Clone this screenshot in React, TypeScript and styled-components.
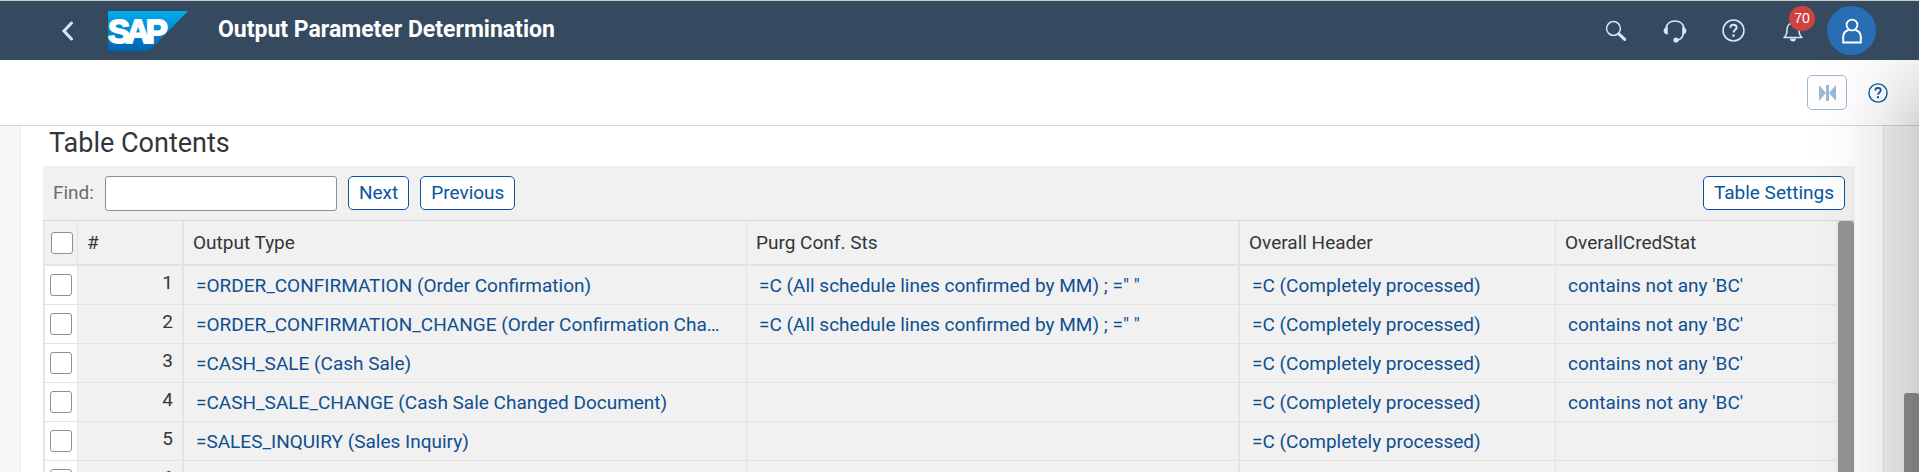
import React from "react";
import styled, { createGlobalStyle } from "styled-components";

const GlobalStyle = createGlobalStyle`
  *, *::before, *::after { box-sizing: border-box; }
  body {
    margin: 0;
    font-family: Roboto, "Liberation Sans", sans-serif;
    color: #32363a;
    background: #fff;
    overflow: hidden;
  }
`;

const Page = styled.div`
  display: flex;
  flex-direction: column;
  height: 100vh;
  overflow: hidden;
`;

const ShellBar = styled.header`
  display: flex;
  align-items: center;
  flex: none;
  height: 60px;
  padding: 0 38px 0 51px;
  background: #354a5f;
  border-top: 1px solid #c9cfc6;
`;

const BackButton = styled.button`
  display: flex;
  align-items: center;
  justify-content: center;
  width: 32px;
  height: 40px;
  padding: 0;
  border: 0;
  background: none;
  color: #d1e8ff;
`;

const LogoLink = styled.a`
  display: flex;
  margin: 0 29px 0 25px;
`;

const AppTitle = styled.h1`
  flex: 1;
  margin: 0;
  padding-bottom: 2px;
  font-size: 23px;
  line-height: 28px;
  font-weight: 700;
  color: #fff;
`;

const ShellButton = styled.button`
  position: relative;
  display: flex;
  align-items: center;
  justify-content: center;
  width: 59px;
  height: 59px;
  padding: 0;
  border: 0;
  background: none;
  color: #d1e8ff;
`;

const Badge = styled.span`
  position: absolute;
  top: 5px;
  left: 26px;
  width: 26px;
  height: 25px;
  border-radius: 13px;
  background: #cf4242;
  color: #fff;
  font-size: 14px;
  line-height: 24px;
  text-align: center;
`;

const Avatar = styled.span`
  display: flex;
  align-items: center;
  justify-content: center;
  width: 49px;
  height: 49px;
  border-radius: 50%;
  background: #286eb4;
  color: #fff;
`;

const PageToolbar = styled.div`
  display: flex;
  align-items: center;
  justify-content: flex-end;
  flex: none;
  gap: 19px;
  height: 66px;
  padding: 0 29px 0 0;
  border-bottom: 1px solid #d5d5d5;
`;

const CollapseButton = styled.button`
  display: flex;
  align-items: center;
  justify-content: center;
  width: 40px;
  height: 35px;
  padding: 0;
  border: 1px solid #9ab9d9;
  border-radius: 5px;
  background: #fff;
  color: #9ab9d9;
`;

const HelpButton = styled.button`
  display: flex;
  padding: 2px;
  border: 0;
  background: none;
  color: #0854a0;
`;

const Body = styled.main`
  display: flex;
  flex: 1;
  min-height: 0;
  padding-left: 20px;
  background: #f7f7f7;
`;

const Panel = styled.section`
  flex: 1;
  min-width: 0;
  padding: 0 28px 0 22px;
  overflow: hidden;
  background: #fff;
  border-left: 1px solid #ebebeb;
  border-right: 1px solid #e5e5e5;
`;

const PageScroll = styled.div`
  flex: none;
  width: 15px;
  margin-left: 20px;
  padding-top: 267px;
  background: #fbfbfb;
`;

const ScrollThumb = styled.div`
  height: 100%;
  border-radius: 3px 3px 0 0;
  background: #949494;
`;

const PanelTitle = styled.h2`
  height: 40px;
  margin: 0;
  padding: 0 6px;
  font-size: 27px;
  line-height: 34px;
  font-weight: 400;
`;

const FindBar = styled.div`
  display: flex;
  align-items: center;
  gap: 11px;
  height: 54px;
  padding: 0 10px;
  background: #f1f1f1;
`;

const FindLabel = styled.label`
  font-size: 19px;
  line-height: 24px;
  color: #6a6d70;
`;

const FindInput = styled.input`
  width: 232px;
  height: 35px;
  padding: 0 8px;
  border: 1px solid #89919a;
  border-radius: 3px;
  background: #fff;
  font: inherit;
  font-size: 19px;
`;

const ActionButton = styled.button<{ $end?: boolean }>`
  height: 34px;
  margin-left: ${(p) => (p.$end ? "auto" : "0")};
  padding: 0 10px;
  border: 1px solid #0854a0;
  border-radius: 5px;
  background: #fff;
  color: #0854a0;
  font: inherit;
  font-size: 19px;
  line-height: 24px;
`;

const TableArea = styled.div`
  display: flex;
  border-top: 1px solid #d9d9d9;
  border-left: 2px solid #e5e5e5;
`;

const TableScroll = styled.div`
  flex: none;
  width: 18px;
  padding: 0 1px;
  background: #f1f1f1;
`;

const Grid = styled.table`
  flex: 1;
  width: 100%;
  min-width: 0;
  table-layout: fixed;
  border-collapse: separate;
  border-spacing: 0;
  background: #f1f1f1;
`;

const Col = styled.col<{ $width?: number }>`
  width: ${(p) => (p.$width ? p.$width + "px" : "auto")};
`;

const HeadCell = styled.th<{ $divider?: number }>`
  height: 45px;
  padding: 0 9px;
  border-right: ${(p) => p.$divider ?? 1}px solid #e3e3e3;
  border-bottom: 2px solid #e3e3e3;
  font-size: 19px;
  line-height: 24px;
  font-weight: 400;
  text-align: left;
`;

const Cell = styled.td<{ $divider?: number; $white?: boolean }>`
  height: 39px;
  padding: 2px 11px 0 12px;
  border-right: ${(p) => p.$divider ?? 1}px solid #e3e3e3;
  border-bottom: 1px solid #e3e3e3;
  background: ${(p) => (p.$white ? "#fff" : "#f1f1f1")};
  font-size: 19px;
  line-height: 24px;
  white-space: nowrap;
  overflow: hidden;
  text-overflow: ellipsis;
`;

const NumberCell = styled(Cell)`
  padding: 0 9px 4px;
  text-align: right;
`;

const CheckCell = styled(Cell)`
  padding: 0 5px;
`;

const CheckHead = styled(HeadCell)`
  padding: 0 6px;
`;

const CheckBox = styled.input.attrs({ type: "checkbox" })`
  appearance: none;
  display: block;
  width: 22px;
  height: 22px;
  margin: 0;
  border: 1px solid #89919a;
  border-radius: 3px;
  background: #fff;
`;

const CellLink = styled.a`
  color: #0f4f8f;
  text-decoration: none;
`;

const EdgeShade = styled.div`
  position: fixed;
  top: 60px;
  right: 0;
  bottom: 0;
  width: 110px;
  pointer-events: none;
  background: linear-gradient(to right, transparent 0%, rgba(0, 0, 0, 0.02) 35%, rgba(0, 0, 0, 0.07) 65%, rgba(0, 0, 0, 0.17) 100%);
  mask-image: linear-gradient(to bottom, rgba(0, 0, 0, 0.35), #000 70px);
`;

function HelpIcon({ size }: { size: number }) {
  return (
    <svg width={size} height={size} viewBox="0 0 22 22" fill="none" stroke="currentColor" aria-hidden="true">
      <circle cx="11" cy="11" r="10" strokeWidth="1.5" />
      <path d="M8 8.3C8 6.3 9.3 5.4 11 5.4s3 1 3 2.7c0 2.2-2.9 2.3-2.9 4.9" strokeWidth="1.9" />
      <path d="M11 14.7v2.2" strokeWidth="2.2" />
    </svg>
  );
}

function SapLogo() {
  return (
    <svg width="81" height="40" viewBox="0 0 81 40" aria-label="SAP">
      <defs>
        <linearGradient id="sapBlue" x1="0" y1="0" x2="0" y2="1">
          <stop offset="0" stopColor="#00aeef" />
          <stop offset="0.5" stopColor="#0087d2" />
          <stop offset="1" stopColor="#0065b3" />
        </linearGradient>
      </defs>
      <path d="M0 0h80L41 40H0z" fill="url(#sapBlue)" />
      <text x="0" y="32" fill="#fff" stroke="#fff" strokeWidth="1.8" fontFamily="Liberation Sans, sans-serif" fontWeight="700" fontSize="33" letterSpacing="-4">
        SAP
      </text>
    </svg>
  );
}

type Row = { output: string; purg: string; header: string; cred: string };

const PURG = '=C (All schedule lines confirmed by MM) ; =" "';
const DONE = "=C (Completely processed)";
const CRED = "contains not any 'BC'";

const rows: Row[] = [
  { output: "=ORDER_CONFIRMATION (Order Confirmation)", purg: PURG, header: DONE, cred: CRED },
  { output: "=ORDER_CONFIRMATION_CHANGE (Order Confirmation Cha…", purg: PURG, header: DONE, cred: CRED },
  { output: "=CASH_SALE (Cash Sale)", purg: "", header: DONE, cred: CRED },
  { output: "=CASH_SALE_CHANGE (Cash Sale Changed Document)", purg: "", header: DONE, cred: CRED },
  { output: "=SALES_INQUIRY (Sales Inquiry)", purg: "", header: DONE, cred: "" },
  { output: "", purg: "", header: "", cred: "" },
];

function LinkCell({ text, divider }: { text: string; divider?: number }) {
  return <Cell $divider={divider}>{text && <CellLink href="#">{text}</CellLink>}</Cell>;
}

export default function App() {
  return (
    <Page>
      <GlobalStyle />
      <ShellBar>
        <BackButton aria-label="Back">
          <svg width="13" height="20" viewBox="0 0 13 20" fill="none" stroke="currentColor" strokeWidth="3" strokeLinecap="round">
            <path d="M10.5 2 3 10l7.500 8" />
          </svg>
        </BackButton>
        <LogoLink href="#" aria-label="SAP home">
          <SapLogo />
        </LogoLink>
        <AppTitle>Output Parameter Determination</AppTitle>
        <ShellButton aria-label="Search">
          <svg width="22" height="22" viewBox="0 0 22 22" fill="none" stroke="currentColor">
            <circle cx="8.5" cy="8.5" r="6.9" strokeWidth="1.5" />
            <path d="m13.8 13.8 5.9 5.6" strokeWidth="3" strokeLinecap="round" />
          </svg>
        </ShellButton>
        <ShellButton aria-label="Support">
          <svg width="24" height="24" viewBox="0 0 24 24" fill="none" stroke="currentColor" strokeWidth="1.5">
            <path d="M3 9C4 4.500 7.500 2 12 2s8 2.500 9 7M20.500 14.500c-.8 3.600-3 6.200-6.500 6.700" />
            <path d="M4.800 8v7.500C2.500 15.500.6 14 .6 11.800S2.500 8 4.800 8zM19.200 8v7.500c2.300 0 4.200-1.500 4.200-3.700S21.500 8 19.200 8z" fill="currentColor" stroke="none" />
            <circle cx="13" cy="21" r="2.600" fill="currentColor" stroke="none" />
          </svg>
        </ShellButton>
        <ShellButton aria-label="Help">
          <HelpIcon size={23} />
        </ShellButton>
        <ShellButton aria-label="Notifications">
          <svg width="22" height="22" viewBox="0 0 22 22" fill="none" stroke="currentColor" strokeWidth="1.5">
            <path d="M2 17.500c2.400-2 3-4 3-7.500 0-4 2.200-7 6-7s6 3 6 7c0 3.500.6 5.500 3 7.500z" strokeLinejoin="round" />
            <path d="M8 18.500h6c0 1.700-1.300 3-3 3s-3-1.300-3-3z" fill="currentColor" stroke="none" />
          </svg>
          <Badge>70</Badge>
        </ShellButton>
        <ShellButton aria-label="User profile">
          <Avatar>
            <svg width="20" height="26" viewBox="0 0 20 26" fill="none" stroke="currentColor" strokeWidth="1.900">
              <circle cx="10" cy="7" r="5.400" />
              <path d="M6.500 12C3 13 1.200 15.500 1.200 19v5.500h17.600V19c0-3.500-1.800-6-5.300-7" />
            </svg>
          </Avatar>
        </ShellButton>
      </ShellBar>

      <PageToolbar>
        <CollapseButton aria-label="Collapse">
          <svg width="17" height="16" viewBox="0 0 17 16" fill="currentColor">
            <path d="M0 0l7 8-7 8zM17 0l-7 8 7 8zM7 0h3v16h-3z" />
          </svg>
        </CollapseButton>
        <HelpButton aria-label="Page help">
          <HelpIcon size={20} />
        </HelpButton>
      </PageToolbar>

      <Body>
        <Panel>
          <PanelTitle>Table Contents</PanelTitle>
          <FindBar>
            <FindLabel htmlFor="find">Find:</FindLabel>
            <FindInput id="find" type="text" />
            <ActionButton>Next</ActionButton>
            <ActionButton>Previous</ActionButton>
            <ActionButton $end>Table Settings</ActionButton>
          </FindBar>
          <TableArea>
            <Grid>
              <colgroup>
                <Col $width={33} />
                <Col $width={106} />
                <Col $width={563} />
                <Col $width={493} />
                <Col $width={316} />
                <Col />
              </colgroup>
              <thead>
                <tr>
                  <CheckHead>
                    <CheckBox aria-label="Select all rows" />
                  </CheckHead>
                  <HeadCell $divider={2}>#</HeadCell>
                  <HeadCell>Output Type</HeadCell>
                  <HeadCell $divider={2}>Purg Conf. Sts</HeadCell>
                  <HeadCell>Overall Header</HeadCell>
                  <HeadCell>OverallCredStat</HeadCell>
                </tr>
              </thead>
              <tbody>
                {rows.map((row, i) => (
                  <tr key={i}>
                    <CheckCell $white>
                      <CheckBox aria-label={`Select row ${i + 1}`} />
                    </CheckCell>
                    <NumberCell $divider={2}>{i + 1}</NumberCell>
                    <LinkCell text={row.output} />
                    <LinkCell text={row.purg} divider={2} />
                    <LinkCell text={row.header} />
                    <LinkCell text={row.cred} />
                  </tr>
                ))}
              </tbody>
            </Grid>
            <TableScroll>
              <ScrollThumb />
            </TableScroll>
          </TableArea>
        </Panel>
        <PageScroll>
          <ScrollThumb />
        </PageScroll>
      </Body>
      <EdgeShade />
    </Page>
  );
}
